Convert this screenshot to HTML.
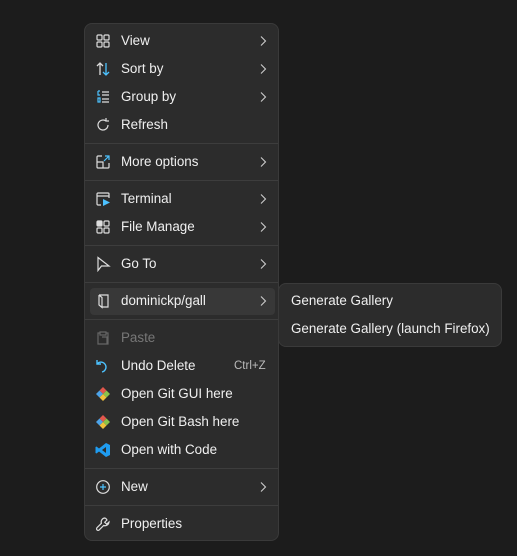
<!DOCTYPE html><html><head><style>
body{margin:0;width:517px;height:556px;background:#1c1c1c;font-family:"Liberation Sans",sans-serif;font-size:13.4px;color:#f0f0f0;position:relative;overflow:hidden}
.m{position:absolute;left:84px;top:23px;width:195px;height:518px;background:#2c2c2c;border-radius:8px;border:1px solid #3a3a3a;box-sizing:border-box}
.s{position:absolute;left:278px;top:283px;width:224px;height:64px;background:#2c2c2c;border-radius:8px;border:1px solid #3a3a3a;box-sizing:border-box}
.r{position:absolute;left:0;height:20px;line-height:20px;white-space:nowrap}
.t{position:absolute;left:121px}
.c{position:absolute;left:257px;width:12px;height:20px}
.i{position:absolute;left:95px;width:16px;height:16px;margin-top:2px}
.sep{position:absolute;left:85px;width:193px;height:1px;background:#3d3d3d}
.hl{position:absolute;left:90px;top:288px;width:185px;height:27px;background:#383838;border-radius:4px}
</style></head><body>
<div class="m"></div>
<div class="hl"></div>
<div class="s"></div>
<svg width="0" height="0" style="position:absolute"><defs><symbol id="chev" viewBox="0 0 12 20"><path d="M4 5.5L8.5 10 4 14.5" fill="none" stroke="#ccc" stroke-width="1.1"/></symbol></defs></svg>

<div class="r" style="top:31px;width:517px">
<svg class="i" viewBox="0 0 16 16" fill="none" stroke="#ddd" stroke-width="1.2"><rect x="2" y="2" width="5" height="5" rx="1"/><rect x="9" y="2" width="5" height="5" rx="1"/><rect x="2" y="9" width="5" height="5" rx="1"/><rect x="9" y="9" width="5" height="5" rx="1"/></svg>
<span class="t">View</span><svg class="c"><use href="#chev"/></svg></div>

<div class="r" style="top:59px;width:517px">
<svg class="i" viewBox="0 0 16 16" fill="none" stroke-width="1.3"><path d="M5 14V2M2 5l3-3 3 3" stroke="#ddd"/><path d="M11 2v12M8 11l3 3 3-3" stroke="#4cc2ff"/></svg>
<span class="t">Sort by</span><svg class="c"><use href="#chev"/></svg></div>

<div class="r" style="top:87px;width:517px">
<svg class="i" viewBox="0 0 16 16" fill="none" stroke-width="1.2"><path d="M3 2h2M3 2v4h2M3 9h2v4H3z" stroke="#4cc2ff"/><path d="M7 3h7M7 6h7M7 10h7M7 13h7" stroke="#ddd"/></svg>
<span class="t">Group by</span><svg class="c"><use href="#chev"/></svg></div>

<div class="r" style="top:115px;width:517px">
<svg class="i" viewBox="0 0 16 16" fill="none" stroke="#ddd" stroke-width="1.2"><path d="M13 8a5 5 0 1 1-2-4M11 1v3h3"/></svg>
<span class="t">Refresh</span></div>
<div class="sep" style="top:143px"></div>

<div class="r" style="top:152px;width:517px">
<svg class="i" viewBox="0 0 16 16" fill="none" stroke-width="1.2"><path d="M7 2H3a1 1 0 0 0-1 1v10a1 1 0 0 0 1 1h10a1 1 0 0 0 1-1V9M2 8h6v6" stroke="#ddd"/><path d="M10 2h4v4M14 2L9 7" stroke="#4cc2ff"/></svg>
<span class="t">More options</span><svg class="c"><use href="#chev"/></svg></div>
<div class="sep" style="top:180px"></div>

<div class="r" style="top:189px;width:517px">
<svg class="i" viewBox="0 0 16 16" fill="none" stroke-width="1.2"><path d="M6 14H3a1 1 0 0 1-1-1V3a1 1 0 0 1 1-1h10a1 1 0 0 1 1 1v4M2 5h12" stroke="#ddd"/><path d="M8 8l7 3.5L8 15z" fill="#4cc2ff" stroke="none"/></svg>
<span class="t">Terminal</span><svg class="c"><use href="#chev"/></svg></div>

<div class="r" style="top:217px;width:517px">
<svg class="i" viewBox="0 0 16 16" fill="none" stroke="#ddd" stroke-width="1.2"><rect x="2" y="2" width="5" height="5" rx="1" fill="#ddd"/><rect x="9" y="2" width="5" height="5" rx="1"/><rect x="2" y="9" width="5" height="5" rx="1"/><rect x="9" y="9" width="5" height="5" rx="1"/></svg>
<span class="t">File Manage</span><svg class="c"><use href="#chev"/></svg></div>
<div class="sep" style="top:245px"></div>

<div class="r" style="top:254px;width:517px">
<svg class="i" viewBox="0 0 16 16" fill="none" stroke="#ddd" stroke-width="1.2"><path d="M3 1.5v13l3.5-4.5H14z"/></svg>
<span class="t">Go To</span><svg class="c"><use href="#chev"/></svg></div>
<div class="sep" style="top:282px"></div>

<div class="r" style="top:291px;width:517px">
<svg class="i" viewBox="0 0 16 16" fill="none" stroke="#ddd" stroke-width="1.2"><path d="M4 2h9v12H7M4 2v10l3 2.5V4.5L4 2"/></svg>
<span class="t">dominickp/gall</span><svg class="c"><use href="#chev"/></svg></div>
<div class="sep" style="top:319px"></div>

<div class="r" style="top:291px;left:291px">Generate Gallery</div>
<div class="r" style="top:319px;left:291px">Generate Gallery (launch Firefox)</div>

<div class="r" style="top:328px;width:517px;color:#777">
<svg class="i" viewBox="0 0 16 16" fill="none" stroke="#666" stroke-width="1.2"><path d="M5 3H3v11h10V3h-2M5 2h6v3H5zM7 7h5v7"/></svg>
<span class="t">Paste</span></div>

<div class="r" style="top:356px;width:517px">
<svg class="i" viewBox="0 0 16 16" fill="none" stroke="#4cc2ff" stroke-width="1.4"><path d="M2 2v4h4M2.5 5.5A5 5 0 1 1 7 14"/></svg>
<span class="t">Undo Delete</span><span style="position:absolute;left:234px;font-size:11.5px;color:#bbb">Ctrl+Z</span></div>

<div class="r" style="top:384px;width:517px">
<svg class="i" viewBox="0 0 16 16"><path d="M8 1l3.5 3.5L8 8 4.5 4.5z" fill="#e2574c"/><path d="M1 8l3.5-3.5L8 8l-3.5 3.5z" fill="#4da3e8"/><path d="M15 8l-3.5 3.5L8 8l3.5-3.5z" fill="#8bc34a"/><path d="M8 15l-3.5-3.5L8 8l3.5 3.5z" fill="#f0c23b"/></svg>
<span class="t">Open Git GUI here</span></div>

<div class="r" style="top:412px;width:517px">
<svg class="i" viewBox="0 0 16 16"><path d="M8 1l3.5 3.5L8 8 4.5 4.5z" fill="#e2574c"/><path d="M1 8l3.5-3.5L8 8l-3.5 3.5z" fill="#4da3e8"/><path d="M15 8l-3.5 3.5L8 8l3.5-3.5z" fill="#8bc34a"/><path d="M8 15l-3.5-3.5L8 8l3.5 3.5z" fill="#f0c23b"/></svg>
<span class="t">Open Git Bash here</span></div>

<div class="r" style="top:440px;width:517px">
<svg class="i" viewBox="0 0 16 16"><path d="M11 1l4 2v10l-4 2L4 9.5 1.5 11.5 0.5 11V5l1-0.5L4 6.5z" fill="#1f9cf0"/><path d="M11 5L7 8l4 3z" fill="#2c2c2c"/></svg>
<span class="t">Open with Code</span></div>
<div class="sep" style="top:468px"></div>

<div class="r" style="top:477px;width:517px">
<svg class="i" viewBox="0 0 16 16" fill="none" stroke-width="1.2"><circle cx="8" cy="8" r="6.3" stroke="#ddd"/><path d="M8 5v6M5 8h6" stroke="#4cc2ff"/></svg>
<span class="t">New</span><svg class="c"><use href="#chev"/></svg></div>
<div class="sep" style="top:505px"></div>

<div class="r" style="top:514px;width:517px">
<svg class="i" viewBox="0 0 16 16" fill="none" stroke="#ddd" stroke-width="1.2"><path d="M10 2a4 4 0 0 0-3.6 5.3L2 11.7a1.5 1.5 0 0 0 2.2 2.2l4.5-4.4A4 4 0 0 0 14 6l-2.3 2.2-2-2L12 4A4 4 0 0 0 10 2z"/></svg>
<span class="t">Properties</span></div>
</body></html>
